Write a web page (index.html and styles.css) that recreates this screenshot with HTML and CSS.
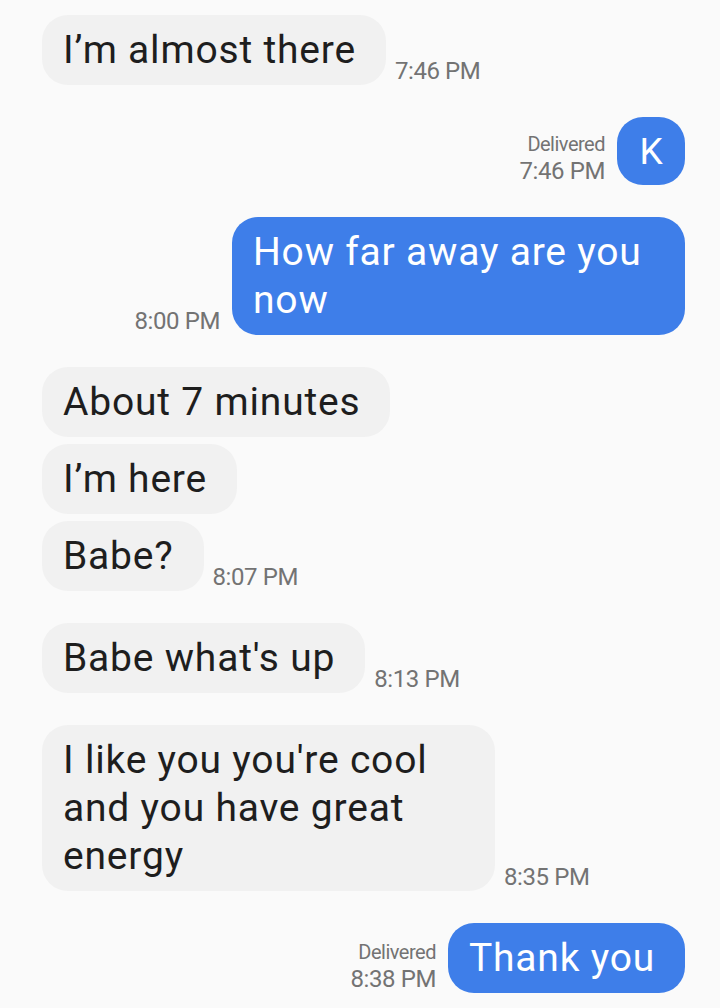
FILE: index.html
```html
<!DOCTYPE html>
<html>
<head>
<meta charset="utf-8">
<link rel="stylesheet" href="styles.css">
</head>
<body>
<main class="thread">
  <div class="row in gap-none">
    <div class="bubble gray">I’m almost there</div>
    <div class="meta"><span class="time">7:46 PM</span></div>
  </div>

  <div class="row out">
    <div class="meta right"><span class="status">Delivered</span><span class="time">7:46 PM</span></div>
    <div class="avatar">K</div>
  </div>

  <div class="row out">
    <div class="meta right"><span class="time">8:00 PM</span></div>
    <div class="bubble blue">How far away are you now</div>
  </div>

  <div class="row in">
    <div class="bubble gray">About 7 minutes</div>
  </div>
  <div class="row in tight">
    <div class="bubble gray">I’m here</div>
  </div>
  <div class="row in tight">
    <div class="bubble gray">Babe?</div>
    <div class="meta"><span class="time">8:07 PM</span></div>
  </div>

  <div class="row in">
    <div class="bubble gray">Babe what's up</div>
    <div class="meta"><span class="time">8:13 PM</span></div>
  </div>

  <div class="row in">
    <div class="bubble gray">I like you you're cool and you have great energy</div>
    <div class="meta"><span class="time">8:35 PM</span></div>
  </div>

  <div class="row out">
    <div class="meta right"><span class="status">Delivered</span><span class="time">8:38 PM</span></div>
    <div class="bubble blue">Thank you</div>
  </div>
</main>
</body>
</html>
```

FILE: styles.css
```css
html, body {
  margin: 0;
  padding: 0;
  background: #fafafa;
}

body {
  font-family: Roboto, "Noto Sans", "Liberation Sans", sans-serif;
  width: 720px;
  height: 1008px;
  overflow: hidden;
}

.thread {
  display: flex;
  flex-direction: column;
  padding: 15px 35px 0 42px;
}

.row {
  display: flex;
  align-items: flex-end;
  margin-top: 32px;
}

.row.gap-none {
  margin-top: 0;
}

.row.tight {
  margin-top: 7px;
}

.row.in {
  justify-content: flex-start;
}

.row.out {
  justify-content: flex-end;
}

.bubble {
  font-size: 39px;
  line-height: 48px;
  padding: 11px 30px 11px 21px;
  border-radius: 26px;
  letter-spacing: 0.8px;
  max-width: 402px;
}

.bubble.gray {
  background: #f1f1f1;
  color: #1e1e1e;
}

.bubble.blue {
  background: #3e7ee9;
  color: #ffffff;
}

.meta {
  display: flex;
  flex-direction: column;
  color: #737373;
  padding-bottom: 0;
}

.row.in .meta {
  margin-left: 9px;
}

.row.out .meta {
  margin-right: 12px;
  align-items: flex-end;
}

.time {
  font-size: 24px;
  line-height: 28px;
  letter-spacing: -0.4px;
}

.status {
  font-size: 20px;
  line-height: 26px;
  letter-spacing: -0.5px;
}

.avatar {
  width: 68px;
  height: 68px;
  border-radius: 26px;
  background: #3e7ee9;
  color: #ffffff;
  font-size: 37px;
  display: flex;
  align-items: center;
  justify-content: center;
}
```
